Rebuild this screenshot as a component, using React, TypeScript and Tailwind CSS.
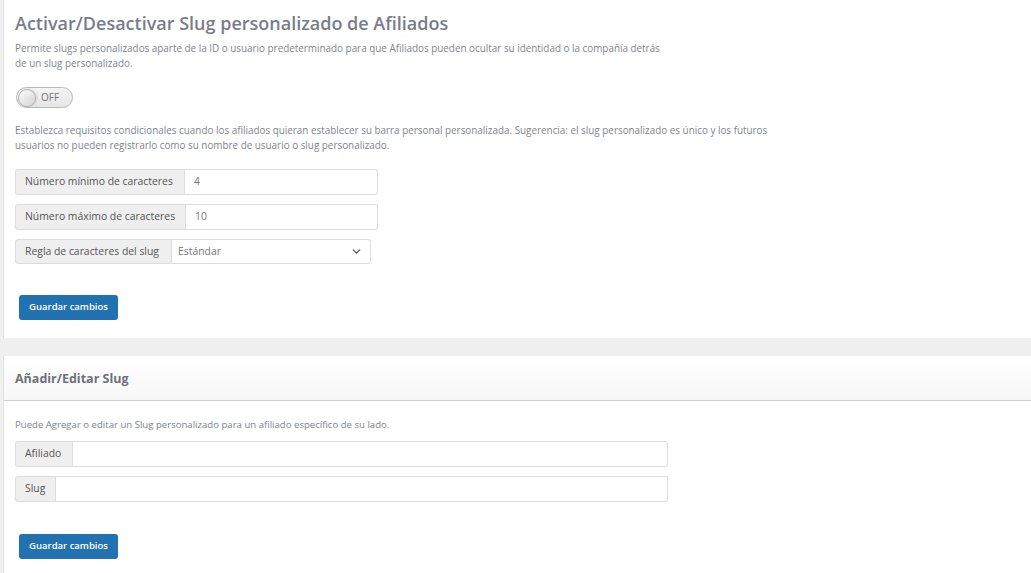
import { ChevronDown } from "lucide-react";

const font = { fontFamily: '"Open Sans", "Segoe UI", sans-serif' };

function InputGroup({
  label,
  value,
  width,
  labelWidth,
}: {
  label: string;
  value?: string;
  width: string;
  labelWidth: string;
}) {
  return (
    <div className={`flex h-[26px] ${width}`}>
      <span
        className={`flex items-center ${labelWidth} shrink-0 whitespace-nowrap rounded-l-[3px] border border-[#dcdcdc] bg-[#efefef] px-[9px] text-[10.4px] text-[#555]`}
      >
        {label}
      </span>
      <div className="flex flex-1 items-center rounded-r-[3px] border border-l-0 border-[#dcdcdc] bg-white px-[9px] text-[10.4px] text-[#777]">
        {value}
      </div>
    </div>
  );
}

function SaveButton() {
  return (
    <button
      type="button"
      className="ml-[4px] h-[25px] w-[99px] rounded-[3px] bg-[#2271b1] text-[9.5px] font-semibold text-white"
    >
      Guardar cambios
    </button>
  );
}

export default function App() {
  return (
    <div className="min-h-[573px] bg-[#f0f0f1] pl-[3px]" style={font}>
      {/* Activar / desactivar */}
      <section className="h-[338px] border-l border-[#e2e2e2] bg-white px-[11px] pt-[12px]">
        <h1 className="text-[18px] leading-[23px] font-semibold text-[#787d88]">
          Activar/Desactivar Slug personalizado de Afiliados
        </h1>
        <p className="mt-[6px] text-[9.9px] leading-[15px] text-[#80858e]">
          Permite slugs personalizados aparte de la ID o usuario predeterminado para que Afiliados pueden ocultar su identidad o la compañía detrás
          <br />
          de un slug personalizado.
        </p>

        <div className="mt-[16px] ml-[1px] flex h-[21px] w-[57px] items-center rounded-full border border-[#b9b9b9] bg-gradient-to-b from-[#f4f4f4] to-[#e6e6e6]">
          <span className="ml-[1px] h-[18px] w-[18px] rounded-full border border-[#b5b5b5] bg-gradient-to-br from-[#fbfbfb] to-[#d5d5d5] shadow-[1px_0_2px_rgba(0,0,0,0.15)]" />
          <span className="ml-[5px] text-[10px] text-[#777]">OFF</span>
        </div>

        <p className="mt-[15px] text-[9.9px] leading-[15px] text-[#80858e]">
          Establezca requisitos condicionales cuando los afiliados quieran establecer su barra personal personalizada. Sugerencia: el slug personalizado es único y los futuros
          <br />
          usuarios no pueden registrarlo como su nombre de usuario o slug personalizado.
        </p>

        <div className="mt-[16px] flex flex-col gap-[9px]">
          <InputGroup label="Número mínimo de caracteres" value="4" width="w-[363px]" labelWidth="w-[170px]" />
          <InputGroup label="Número máximo de caracteres" value="10" width="w-[363px]" labelWidth="w-[171px]" />
          <div className="flex h-[25px] w-[356px]">
            <span className="flex w-[157px] shrink-0 items-center whitespace-nowrap rounded-l-[3px] border border-[#dcdcdc] bg-[#efefef] px-[9px] text-[10.4px] text-[#555]">
              Regla de caracteres del slug
            </span>
            <div className="flex flex-1 items-center justify-between rounded-r-[3px] border border-l-0 border-[#dcdcdc] bg-white pr-[7px] pl-[6px] text-[10.4px] text-[#777]">
              Estándar
              <ChevronDown className="h-[13px] w-[13px] text-[#555]" strokeWidth={2.5} />
            </div>
          </div>
        </div>

        <div className="mt-[28px]">
          <SaveButton />
        </div>
      </section>

      <div className="h-[18px]" />

      {/* Añadir / editar slug */}
      <section className="h-[217px] border-l border-[#e2e2e2] bg-white">
        <div className="flex h-[45px] items-center border-b border-[#cfcfcf] bg-gradient-to-b from-white to-[#f7f7f7] px-[11px] pt-[2px]">
          <h2 className="text-[12.5px] font-bold text-[#6d717a]">Añadir/Editar Slug</h2>
        </div>
        <div className="px-[11px] pt-[16px]">
          <p className="text-[9.6px] leading-[15px] text-[#80858e]">
            Puede Agregar o editar un Slug personalizado para un afiliado específico de su lado.
          </p>
          <div className="mt-[9px] flex flex-col gap-[9px]">
            <InputGroup label="Afiliado" width="w-[653px]" labelWidth="w-[58px]" />
            <InputGroup label="Slug" width="w-[653px]" labelWidth="w-[41px]" />
          </div>
          <div className="mt-[29px]">
            <SaveButton />
          </div>
        </div>
      </section>
    </div>
  );
}
